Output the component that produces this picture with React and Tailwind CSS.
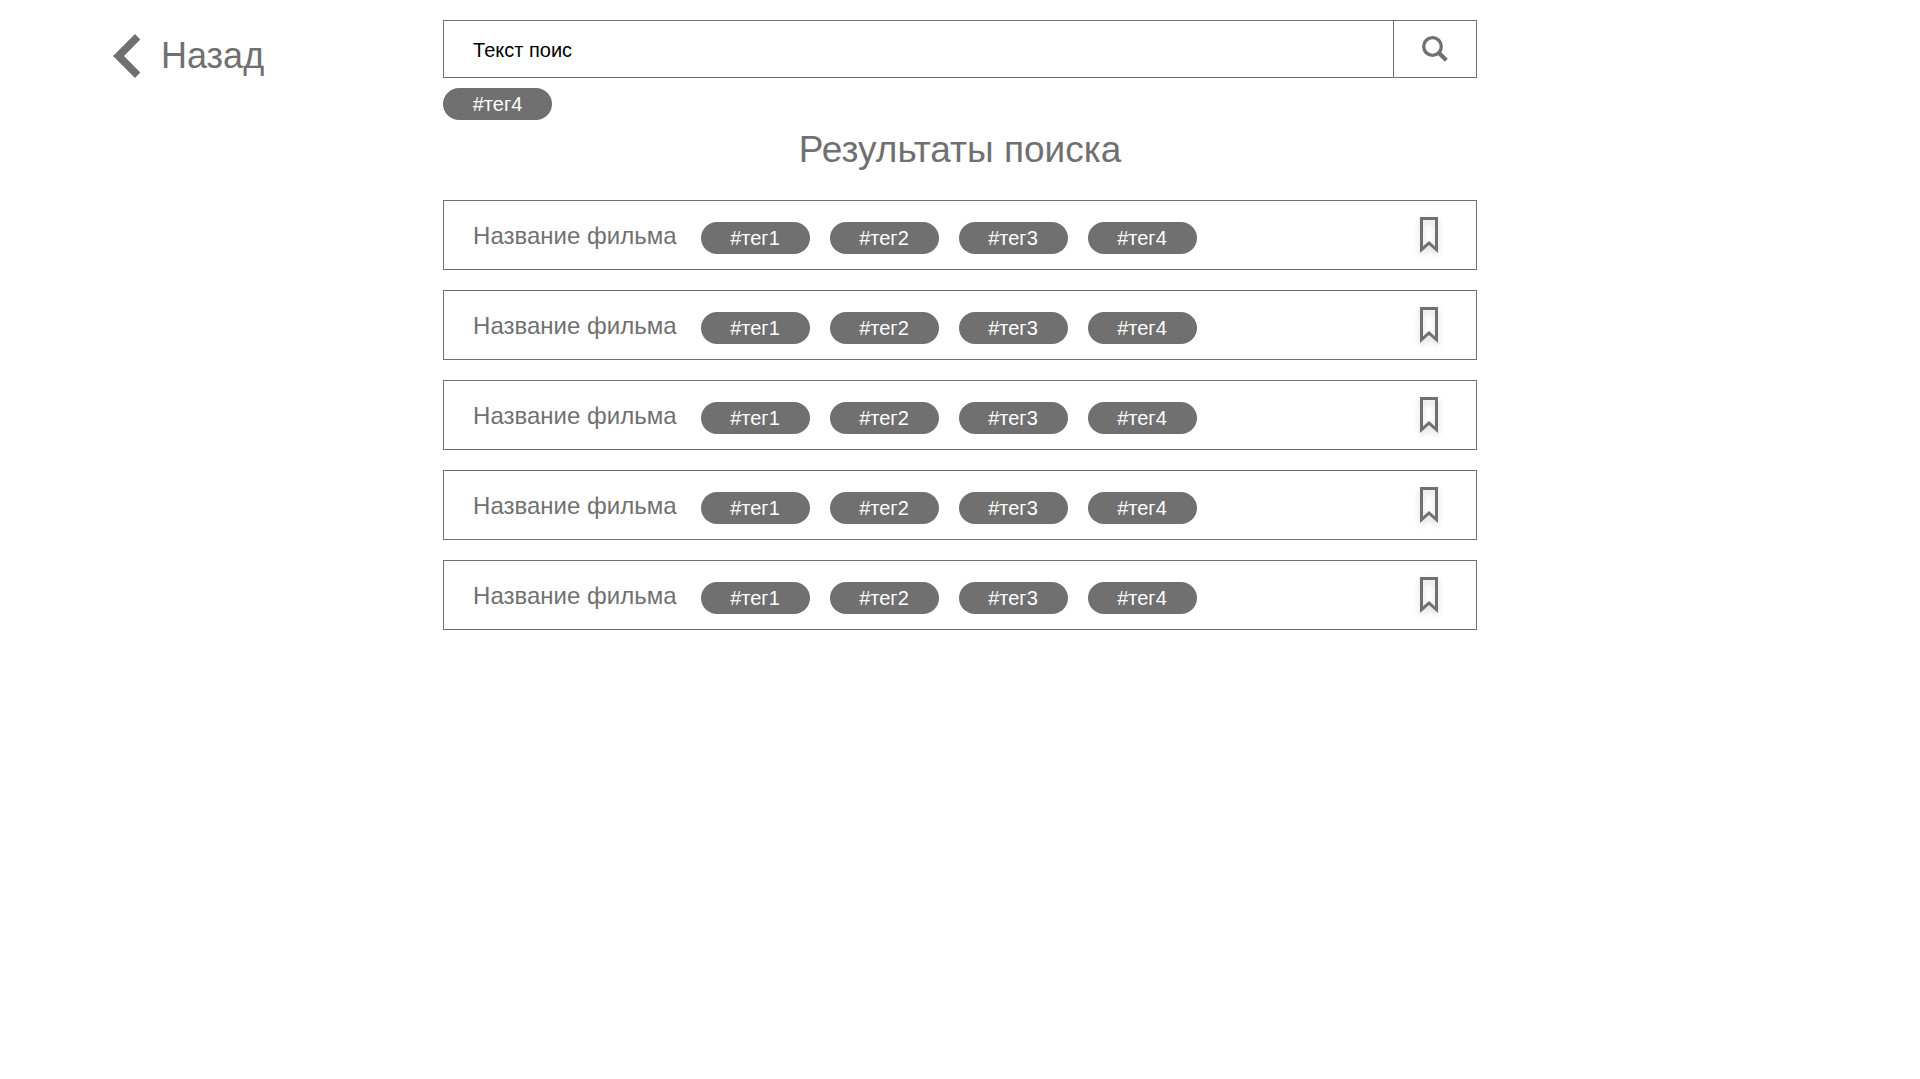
const TAGS = ['#тег1', '#тег2', '#тег3', '#тег4'];

const MOVIES = [1, 2, 3, 4, 5].map((id) => ({ id, title: 'Название фильма', tags: TAGS }));

function BackIcon() {
  return (
    <svg className="h-11 w-7 shrink-0" viewBox="0 0 28 44" fill="currentColor" aria-hidden="true">
      <path d="M22 0L27.3 5.4L11 22L27.3 38.6L22 44L0 22Z" />
    </svg>
  );
}

function SearchIcon() {
  return (
    <svg className="size-[26px]" viewBox="0 0 26 26" fill="none" stroke="currentColor" aria-hidden="true">
      <circle cx="10.5" cy="10.5" r="8.8" strokeWidth="3.3" />
      <path d="M16.5 16.5L24.3 24.3" strokeWidth="4.2" />
    </svg>
  );
}

function BookmarkIcon() {
  return (
    <svg
      className="h-9 w-[18px] overflow-visible drop-shadow-[0_3px_3px_rgba(0,0,0,0.16)]"
      viewBox="0 0 18 36"
      fill="currentColor"
      fillRule="evenodd"
      aria-hidden="true"
    >
      <path d="M0 0H18V36L9 28L0 36ZM3 3V29.5L9 24L15 29.5V3Z" />
    </svg>
  );
}

function Tag({ children }) {
  return (
    <button
      type="button"
      className="h-8 min-w-[109px] rounded-2xl bg-[#707070] px-7 text-xl leading-8 whitespace-nowrap text-white"
    >
      {children}
    </button>
  );
}

function MovieRow({ movie }) {
  return (
    <li className="flex h-[70px] items-center border border-[#707070] pr-[38px] pl-[29px]">
      <h2 className="pt-0.5 text-2xl whitespace-nowrap">{movie.title}</h2>
      <div className="mt-[6px] ml-6 flex gap-5">
        {movie.tags.map((tag) => (
          <Tag key={tag}>{tag}</Tag>
        ))}
      </div>
      <button type="button" aria-label="В закладки" className="ml-auto">
        <BookmarkIcon />
      </button>
    </li>
  );
}

export default function App() {
  return (
    <div className="grid min-h-screen grid-cols-[3fr_7fr_3fr] items-start bg-white pt-5 font-['Liberation_Sans',Arial,sans-serif] text-[#707070]">
      <nav className="pt-3.5 pl-[113px]">
        <a href="#back" className="flex items-center gap-5 text-4xl leading-11">
          <BackIcon />
          Назад
        </a>
      </nav>
      <main>
        <form role="search" className="flex h-[58px] border border-[#707070]" onSubmit={(e) => e.preventDefault()}>
          <input
            type="text"
            aria-label="Поиск"
            defaultValue="Текст поис"
            className="min-w-0 flex-1 px-[29px] pt-0.5 text-xl text-black outline-none"
          />
          <button
            type="submit"
            aria-label="Найти"
            className="flex w-[83px] items-center justify-center border-l border-[#707070]"
          >
            <SearchIcon />
          </button>
        </form>
        <div className="mt-2.5 flex gap-5">
          <Tag>#тег4</Tag>
        </div>
        <h1 className="mt-2 text-center text-[37px] leading-11">Результаты поиска</h1>
        <ul className="mt-7 flex flex-col gap-5">
          {MOVIES.map((movie) => (
            <MovieRow key={movie.id} movie={movie} />
          ))}
        </ul>
      </main>
    </div>
  );
}
